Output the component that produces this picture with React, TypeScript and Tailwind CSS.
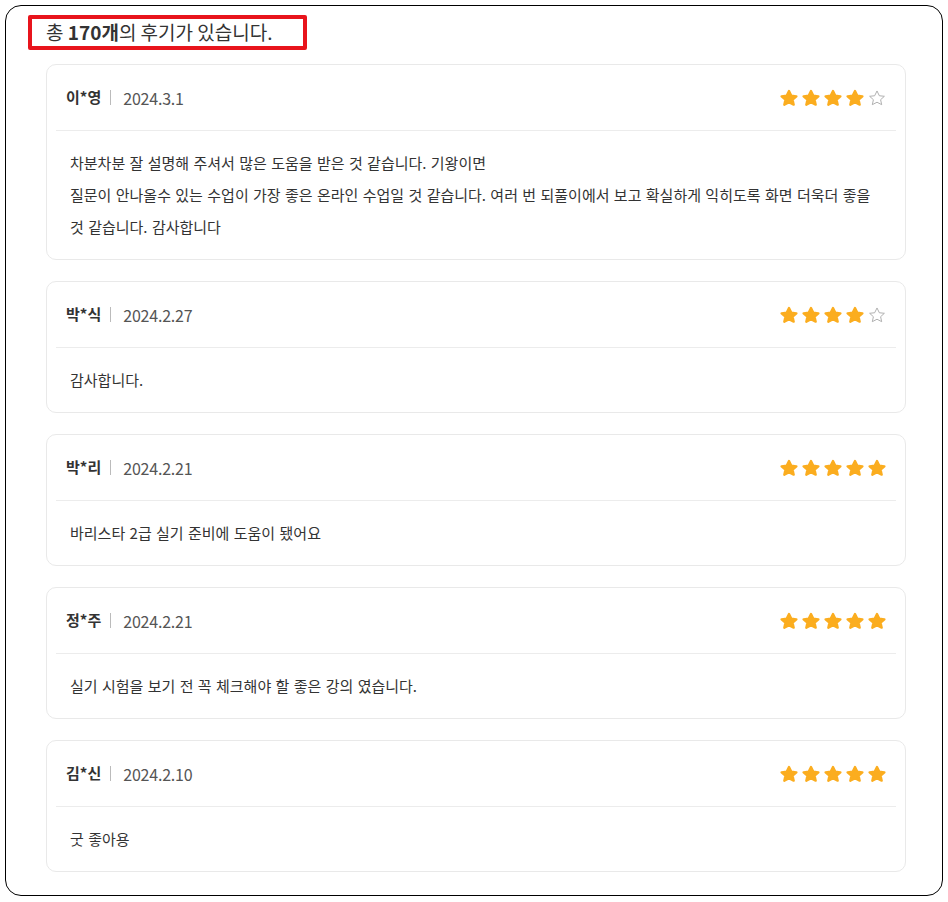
import React from 'react';

interface Review {
  name: string;
  date: string;
  rating: number;
  lines: string[];
}

const reviews: Review[] = [
  {
    name: '이*영',
    date: '2024.3.1',
    rating: 4,
    lines: [
      '차분차분 잘 설명해 주셔서 많은 도움을 받은 것 같습니다. 기왕이면',
      '질문이 안나올수 있는 수업이 가장 좋은 온라인 수업일 것 같습니다. 여러 번 되풀이에서 보고 확실하게 익히도록 화면 더욱더 좋을 것 같습니다. 감사합니다',
    ],
  },
  { name: '박*식', date: '2024.2.27', rating: 4, lines: ['감사합니다.'] },
  { name: '박*리', date: '2024.2.21', rating: 5, lines: ['바리스타 2급 실기 준비에 도움이 됐어요'] },
  { name: '정*주', date: '2024.2.21', rating: 5, lines: ['실기 시험을 보기 전 꼭 체크해야 할 좋은 강의 였습니다.'] },
  { name: '김*신', date: '2024.2.10', rating: 5, lines: ['굿 좋아용'] },
];

const STAR_POINTS = '10,2.2 12.6,7.5 18.2,8.1 14,11.9 15.2,17.4 10,14.7 4.8,17.4 6,11.9 1.8,8.1 7.4,7.5';

const Star: React.FC<{ filled: boolean }> = ({ filled }) => (
  <svg width="18" height="18" viewBox="0 0 20 20" className="block">
    {filled ? (
      <polygon points={STAR_POINTS} fill="#fbad1f" stroke="#fbad1f" strokeWidth="2.6" strokeLinejoin="round" />
    ) : (
      <polygon points={STAR_POINTS} fill="#fff" stroke="#a8a8a8" strokeWidth="1" strokeLinejoin="round" />
    )}
  </svg>
);

const ReviewCard: React.FC<{ review: Review }> = ({ review }) => (
  <div className="rounded-[10px] border border-[#e9e9e9] bg-white px-[9px]">
    <div className="flex h-[66px] items-center justify-between border-b border-[#ececec] px-[10px]">
      <div className="flex items-center">
        <span className="text-[15px] font-bold text-[#333]">{review.name}</span>
        <span className="ml-[9px] mr-[12px] h-[15px] w-px bg-[#bbb]" />
        <span className="text-[16px] tracking-[-0.2px] text-[#555]">{review.date}</span>
      </div>
      <div className="flex gap-[4px]">
        {[0, 1, 2, 3, 4].map((i) => (
          <Star key={i} filled={i < review.rating} />
        ))}
      </div>
    </div>
    <div className="px-[14px] py-4 text-[15px] leading-[32px] text-[#333] [word-spacing:1px]">
      {review.lines.map((line, i) => (
        <React.Fragment key={i}>
          {i > 0 && <br />}
          {line}
        </React.Fragment>
      ))}
    </div>
  </div>
);

export default function App() {
  return (
    <div
      className="h-[902px] w-[948px] bg-white p-[5px]"
      style={{ fontFamily: '"Noto Sans CJK KR", "Noto Sans", sans-serif' }}
    >
      <div className="h-[891px] w-[938px] rounded-[16px] border border-black">
        <div className="ml-[22px] mt-[9px] flex h-[35px] w-[279px] items-center rounded-[2px] border-4 border-[#e8141c] pl-[14px] text-[19px] text-[#333]">
          <span>
            총 <b className="font-bold">170개</b>의 후기가 있습니다.
          </span>
        </div>
        <div className="ml-[40px] mt-[14px] flex w-[860px] flex-col gap-[21px]">
          {reviews.map((r) => (
            <ReviewCard key={r.name + r.date} review={r} />
          ))}
        </div>
      </div>
    </div>
  );
}
